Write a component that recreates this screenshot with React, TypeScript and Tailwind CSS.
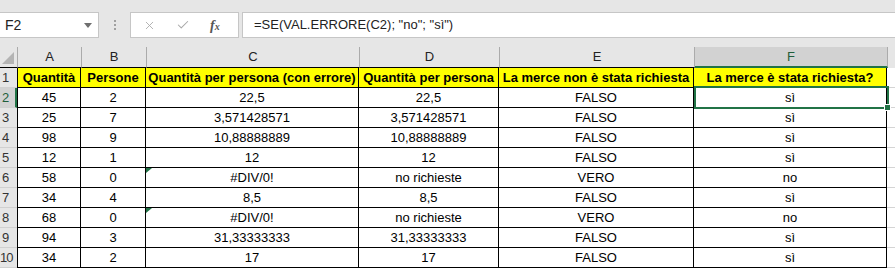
import React from 'react';
import { X, Check } from 'lucide-react';

const cols = [
  { key: 'A', w: 'w-[64px]' },
  { key: 'B', w: 'w-[65px]' },
  { key: 'C', w: 'w-[213px]' },
  { key: 'D', w: 'w-[140px]' },
  { key: 'E', w: 'w-[195px]' },
  { key: 'F', w: 'w-[193px]' },
];

const headers = [
  'Quantità',
  'Persone',
  'Quantità per persona (con errore)',
  'Quantità per persona',
  'La merce non è stata richiesta',
  'La merce è stata richiesta?',
];

const rows: (string | number)[][] = [
  [45, 2, '22,5', '22,5', 'FALSO', 'sì'],
  [25, 7, '3,571428571', '3,571428571', 'FALSO', 'sì'],
  [98, 9, '10,88888889', '10,88888889', 'FALSO', 'sì'],
  [12, 1, '12', '12', 'FALSO', 'sì'],
  [58, 0, '#DIV/0!', 'no richieste', 'VERO', 'no'],
  [34, 4, '8,5', '8,5', 'FALSO', 'sì'],
  [68, 0, '#DIV/0!', 'no richieste', 'VERO', 'no'],
  [94, 3, '31,33333333', '31,33333333', 'FALSO', 'sì'],
  [34, 2, '17', '17', 'FALSO', 'sì'],
];

function RowHead({ n, active }: { n: number; active?: boolean }) {
  return (
    <div
      className={`w-[17px] shrink-0 h-full flex items-center border-b border-[#d0d0d0] text-[13px] ${
        n > 9 ? 'pl-0 tracking-[-1px]' : 'pl-[2px]'
      } ${active ? 'bg-[#d2d2d2] text-[#1f5e3a] border-r-2 border-r-[#217346]' : 'bg-[#e6e6e6] text-[#333]'}`}
    >
      {n}
    </div>
  );
}

export default function App() {
  return (
    <div className="relative w-[895px] h-[269px] overflow-hidden bg-[#e6e6e6] font-['Liberation_Sans',Arial,sans-serif] text-black">
      {/* Formula bar */}
      <div className="h-[47px] pt-[12px] flex">
        <div className="w-[99px] h-[26px] bg-white border border-l-0 border-[#c6c6c6] flex items-center justify-between pl-[5px] pr-[6px]">
          <span className="text-[14px] text-[#222]">F2</span>
          <svg width="8" height="5" viewBox="0 0 8 5">
            <path d="M0 0 L8 0 L4 5 Z" fill="#6f6f6f" />
          </svg>
        </div>
        <div className="w-[31px] h-[26px] flex flex-col items-center justify-center gap-[2px]">
          <div className="w-[2px] h-[2px] bg-[#a0a0a0]" />
          <div className="w-[2px] h-[2px] bg-[#a0a0a0]" />
          <div className="w-[2px] h-[2px] bg-[#a0a0a0]" />
        </div>
        <div className="w-[109px] h-[26px] bg-white border border-[#c6c6c6] flex items-center pl-[12px]">
          <X size={13} strokeWidth={1.6} className="text-[#a8a8a8]" />
          <Check size={14} strokeWidth={1.8} className="text-[#a8a8a8] ml-[20px]" />
          <span className="ml-[20px] text-[14px] italic font-['Liberation_Serif',serif] text-[#555] font-bold">
            f<span className="text-[10px]">x</span>
          </span>
        </div>
        <div className="ml-[3px] flex-1 h-[26px] bg-white border border-r-0 border-[#c6c6c6] flex items-center pl-[11px] text-[13px] text-[#222]">
          =SE(VAL.ERRORE(C2); "no"; "sì")
        </div>
      </div>

      {/* Column headers */}
      <div className="h-[21px] flex">
        <div className="w-[18px] shrink-0 h-full border-r border-[#ababab] border-b border-b-black flex items-end justify-end pr-[3px] pb-[3px]">
          <svg width="12" height="12" viewBox="0 0 12 12">
            <path d="M12 0 L12 12 L0 12 Z" fill="#b4b4b4" />
          </svg>
        </div>
        {cols.map((c) => (
          <div
            key={c.key}
            className={`${c.w} shrink-0 h-full flex items-center justify-center text-[13px] border-r border-[#ababab] ${
              c.key === 'F'
                ? 'bg-[#d2d2d2] text-[#1f5e3a] border-b-2 border-b-[#217346]'
                : 'text-[#222] border-b border-b-black'
            }`}
          >
            {c.key}
          </div>
        ))}
        <div className="flex-1 h-full" />
      </div>

      {/* Rows */}
      <div className="h-[20px] flex">
        <RowHead n={1} />
        {headers.map((h, i) => (
          <div
            key={i}
            className={`${cols[i].w} ${i === 0 ? 'border-l' : ''} shrink-0 h-full bg-[#ffff00] border-r border-b border-black flex items-center justify-center text-[13px] font-bold whitespace-nowrap`}
          >
            {h}
          </div>
        ))}
        <div className="flex-1 h-full bg-white border-b border-[#d4d4d4]" />
      </div>
      {rows.map((r, ri) => (
        <div key={ri} className="h-[20px] flex">
          <RowHead n={ri + 2} active={ri === 0} />
          {r.map((v, i) => (
            <div
              key={i}
              className={`${cols[i].w} ${i === 0 ? 'border-l' : ''} relative shrink-0 h-full bg-white border-r border-b border-black flex items-center justify-center text-[13px] whitespace-nowrap`}
            >
              {v === '#DIV/0!' && (
                <div className="absolute left-0 top-0 w-0 h-0 border-t-[5px] border-t-[#217346] border-r-[6px] border-r-transparent" />
              )}
              {v}
            </div>
          ))}
          <div className="flex-1 h-full bg-white border-b border-[#d4d4d4]" />
        </div>
      ))}
      <div className="h-[2px] bg-white" />

      {/* Selection F2 */}
      <div className="absolute left-[694px] top-[86px] w-[195px] h-[23px] border-2 border-[#217346] pointer-events-none" />
      <div className="absolute left-[884px] top-[104px] w-[7px] h-[7px] bg-[#217346] border border-white" />
    </div>
  );
}
